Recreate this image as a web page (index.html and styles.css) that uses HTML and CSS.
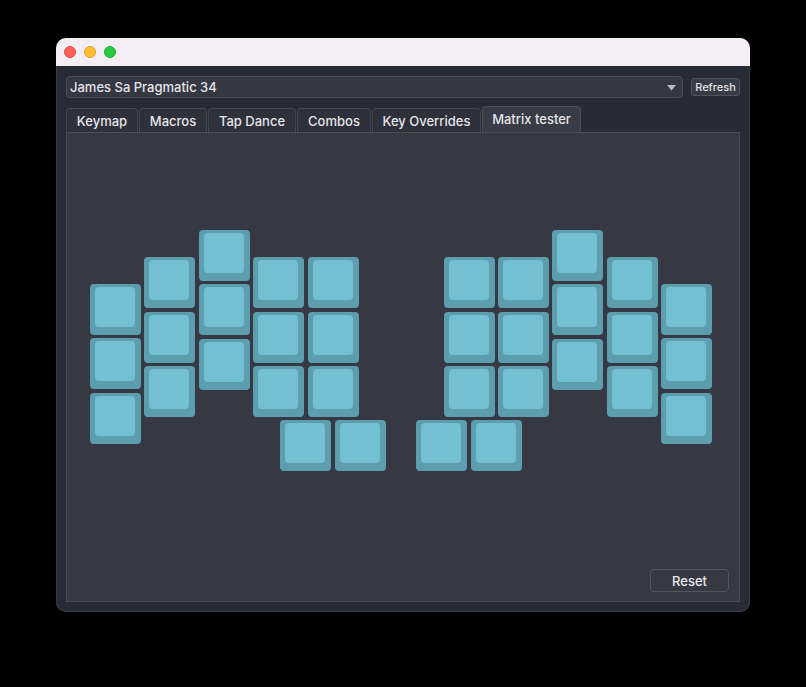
FILE: index.html
```html
<!DOCTYPE html>
<html>
<head>
<meta charset="utf-8">
<link rel="stylesheet" href="styles.css">
</head>
<body>
<div class="window">
  <div class="titlebar">
    <span class="light red"></span>
    <span class="light yellow"></span>
    <span class="light green"></span>
  </div>
  <div class="content">
    <div class="toprow">
      <div class="select">
        <span class="select-text">James Sa Pragmatic 34</span>
        <svg class="caret" width="9" height="6" viewBox="0 0 9 6"><path d="M0 0 H9 L4.5 5.5 Z" fill="#b9bac2"/></svg>
      </div>
      <button class="btn-small">Refresh</button>
    </div>
    <div class="tabs">
      <div class="tab">Keymap</div>
      <div class="tab">Macros</div>
      <div class="tab">Tap Dance</div>
      <div class="tab">Combos</div>
      <div class="tab">Key Overrides</div>
      <div class="tab active">Matrix tester</div>
    </div>
    <div class="panel">
      <div class="board">
        <div class="key" style="left:23px;top:151px"></div>
        <div class="key" style="left:23px;top:205px"></div>
        <div class="key" style="left:23px;top:260px"></div>
        <div class="key" style="left:77px;top:124px"></div>
        <div class="key" style="left:77px;top:179px"></div>
        <div class="key" style="left:77px;top:233px"></div>
        <div class="key" style="left:132px;top:97px"></div>
        <div class="key" style="left:132px;top:151px"></div>
        <div class="key" style="left:132px;top:206px"></div>
        <div class="key" style="left:186px;top:124px"></div>
        <div class="key" style="left:186px;top:179px"></div>
        <div class="key" style="left:186px;top:233px"></div>
        <div class="key" style="left:241px;top:124px"></div>
        <div class="key" style="left:241px;top:179px"></div>
        <div class="key" style="left:241px;top:233px"></div>
        <div class="key" style="left:213px;top:287px"></div>
        <div class="key" style="left:268px;top:287px"></div>

        <div class="key" style="left:349px;top:287px"></div>
        <div class="key" style="left:404px;top:287px"></div>
        <div class="key" style="left:377px;top:124px"></div>
        <div class="key" style="left:377px;top:179px"></div>
        <div class="key" style="left:377px;top:233px"></div>
        <div class="key" style="left:431px;top:124px"></div>
        <div class="key" style="left:431px;top:179px"></div>
        <div class="key" style="left:431px;top:233px"></div>
        <div class="key" style="left:485px;top:97px"></div>
        <div class="key" style="left:485px;top:151px"></div>
        <div class="key" style="left:485px;top:206px"></div>
        <div class="key" style="left:540px;top:124px"></div>
        <div class="key" style="left:540px;top:179px"></div>
        <div class="key" style="left:540px;top:233px"></div>
        <div class="key" style="left:594px;top:151px"></div>
        <div class="key" style="left:594px;top:205px"></div>
        <div class="key" style="left:594px;top:260px"></div>
      </div>
      <div class="footer">
        <button class="btn">Reset</button>
      </div>
    </div>
  </div>
</div>
</body>
</html>
```

FILE: styles.css
```css
html, body {
  margin: 0;
  padding: 0;
  background: #000;
}
body {
  padding: 38px 0 0 56px;
  font-family: "Inter", "Liberation Sans", sans-serif;
  font-weight: 500;
  color: #e4e4e8;
}
.window {
  width: 694px;
  height: 574px;
  border-radius: 10px;
  overflow: hidden;
  background: #282a35;
  display: flex;
  flex-direction: column;
  box-shadow: inset 0 0 0 1px #3a3c46;
}
.titlebar {
  height: 28px;
  flex: none;
  background: #f2eef4;
  display: flex;
  align-items: center;
  gap: 8px;
  padding-left: 8px;
  box-sizing: border-box;
}
.light {
  width: 12px;
  height: 12px;
  border-radius: 50%;
  box-sizing: border-box;
}
.red { background: #fe5f57; border: 0.5px solid #e1463f; }
.yellow { background: #febc2e; border: 0.5px solid #dfa023; }
.green { background: #28c840; border: 0.5px solid #1daa2d; }
.content {
  flex: 1;
  display: flex;
  flex-direction: column;
  padding: 10px 10px 10px 10px;
  min-height: 0;
}
.toprow {
  display: flex;
  align-items: center;
  height: 22px;
  gap: 8px;
}
.select {
  flex: none;
  width: 617px;
  height: 22px;
  box-sizing: border-box;
  border: 1px solid #4a4c57;
  border-radius: 4px;
  background: #353743;
  display: flex;
  align-items: center;
  justify-content: space-between;
  padding: 0 6px 0 3px;
  font-size: 13px;
}
.caret { margin-top: 1px; }
.btn-small {
  width: 49px;
  height: 18px;
  box-sizing: border-box;
  border: 1px solid #50525d;
  border-radius: 3px;
  background: #383a46;
  color: #e4e4e8;
  font-family: inherit;
  font-weight: 500;
  font-size: 11px;
  padding: 0;
}
.tabs {
  display: flex;
  align-items: flex-end;
  gap: 1px;
  margin-top: 8px;
  height: 26px;
}
.tab {
  height: 24px;
  box-sizing: border-box;
  border: 1px solid #43454f;
  border-bottom: none;
  border-radius: 4px 4px 0 0;
  background: #2e303b;
  font-size: 13px;
  display: flex;
  align-items: center;
  justify-content: center;
  padding: 1px 0 0;
}
.tab:nth-child(1) { width: 72px; }
.tab:nth-child(2) { width: 68px; }
.tab:nth-child(3) { width: 88px; }
.tab:nth-child(4) { width: 74px; }
.tab:nth-child(5) { width: 109px; }
.tab.active {
  width: 99px;
  height: 26px;
  background: #393b47;
  border-color: #4a4c57;
  padding: 0 0 2px;
}
.panel {
  flex: 1;
  background: #363844;
  border: 1px solid #4a4c57;
  display: flex;
  flex-direction: column;
  box-sizing: border-box;
}
.board {
  flex: 1;
  position: relative;
}
.key {
  position: absolute;
  width: 51px;
  height: 51px;
  background: #5c9eae;
  border-radius: 4px;
  box-sizing: border-box;
  padding: 3px 6px 8px 5px;
}
.key::after {
  content: "";
  display: block;
  width: 100%;
  height: 100%;
  background: #73c0d2;
  border-radius: 4px;
}
.footer {
  display: flex;
  justify-content: flex-end;
  padding: 0 10px 9px 0;
}
.btn {
  width: 79px;
  height: 23px;
  box-sizing: border-box;
  border: 1px solid #53555f;
  border-radius: 4px;
  background: #363844;
  color: #e8e8ec;
  font-family: inherit;
  font-weight: 500;
  font-size: 13px;
  padding: 0;
}
```
